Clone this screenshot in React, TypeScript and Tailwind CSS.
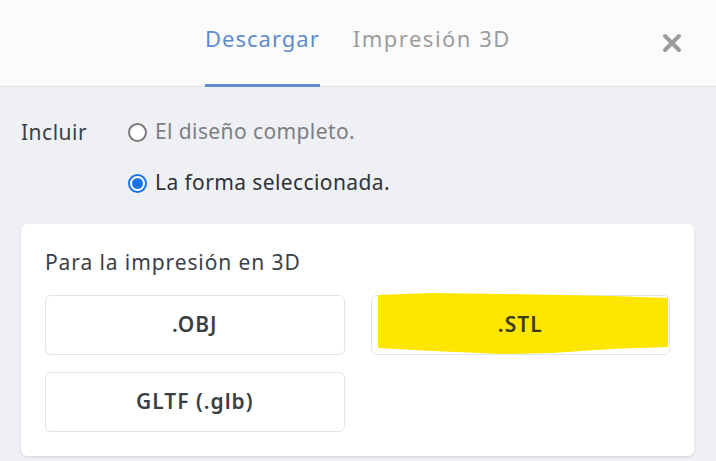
import React from "react";

export default function App() {
  return (
    <div className="w-[716px] h-[461px] overflow-hidden bg-[#eef0f3] flex flex-col" style={{ fontFamily: '"Noto Sans", "Open Sans", sans-serif' }}>
      <div className="h-[87px] bg-[#fbfbfc] border-b border-[#e3e5e9] flex items-stretch relative shrink-0">
        <div className="flex items-stretch ml-[205px] gap-[33px]">
          <div className="relative flex items-center pb-[10px]">
            <span className="text-[22px] tracking-[1px] text-[#5f8ccb]">Descargar</span>
            <div className="absolute left-0 right-0 bottom-[-1px] h-[3px] bg-[#5f8ccb]" />
          </div>
          <div className="flex items-center pb-[10px]">
            <span className="text-[22px] tracking-[1.5px] text-[#9a9c9e]">Impresión 3D</span>
          </div>
        </div>
        <div className="absolute left-[660px] top-[31px]">
          <svg width="24" height="24" viewBox="0 0 24 24">
            <path d="M5 5 L19 19 M19 5 L5 19" stroke="#9b9b9b" strokeWidth="4" strokeLinecap="round" />
          </svg>
        </div>
      </div>
      <div className="flex flex-col px-[21px] pt-[31px]">
        <div className="flex">
          <div className="w-[107px] text-[21px] tracking-[0.5px] text-[#3c4047] leading-[28px]">Incluir</div>
          <div className="flex flex-col gap-[23px]">
            <div className="flex items-center gap-[8px] h-[28px]">
              <div className="w-[19px] h-[19px] rounded-full border-[2px] border-[#7a7a7a] bg-white" />
              <span className="text-[21px] tracking-[0.4px] text-[#7c7f84]">El diseño completo.</span>
            </div>
            <div className="flex items-center gap-[8px] h-[28px]">
              <div className="w-[19px] h-[19px] rounded-full border-[2px] border-[#1a73e8] bg-white flex items-center justify-center">
                <div className="w-[11px] h-[11px] rounded-full bg-[#1a73e8]" />
              </div>
              <span className="text-[21px] tracking-[0.4px] text-[#2f3338]">La forma seleccionada.</span>
            </div>
          </div>
        </div>
        <div className="mt-[27px] bg-white rounded-[6px] shadow-[0_1px_3px_rgba(0,0,0,0.12)] px-[24px] pt-[24px] pb-[24px] w-[673px]">
          <div className="text-[21px] tracking-[0.9px] text-[#3c4047] leading-[28px]">Para la impresión en 3D</div>
          <div className="grid grid-cols-2 gap-x-[26px] gap-y-[17px] mt-[19px]">
            <div className="h-[60px] border border-[#e2e4e8] rounded-[6px] flex items-center justify-center text-[21px] font-semibold tracking-[1px] text-[#3a3f46]">.OBJ</div>
            <div className="relative h-[60px] border border-[#e2e4e8] rounded-[6px] flex items-center justify-center text-[21px] font-semibold tracking-[1px] text-[#3a3f46]">
              <svg className="absolute left-0 top-0 overflow-visible" width="300" height="60" viewBox="0 0 300 60">
                <path d="M6 -1 L60 -3 L130 -2 L190 -1 L240 0 L296 2 L296 51 L240 53 L180 57 L130 58 L60 55 L6 52 Z" fill="#ffe600" />
              </svg>
              <span className="relative text-[#3b3a1a]">.STL</span>
            </div>
            <div className="h-[60px] border border-[#e2e4e8] rounded-[6px] flex items-center justify-center text-[21px] font-semibold tracking-[1px] text-[#3a3f46]">GLTF (.glb)</div>
          </div>
        </div>
      </div>
    </div>
  );
}
